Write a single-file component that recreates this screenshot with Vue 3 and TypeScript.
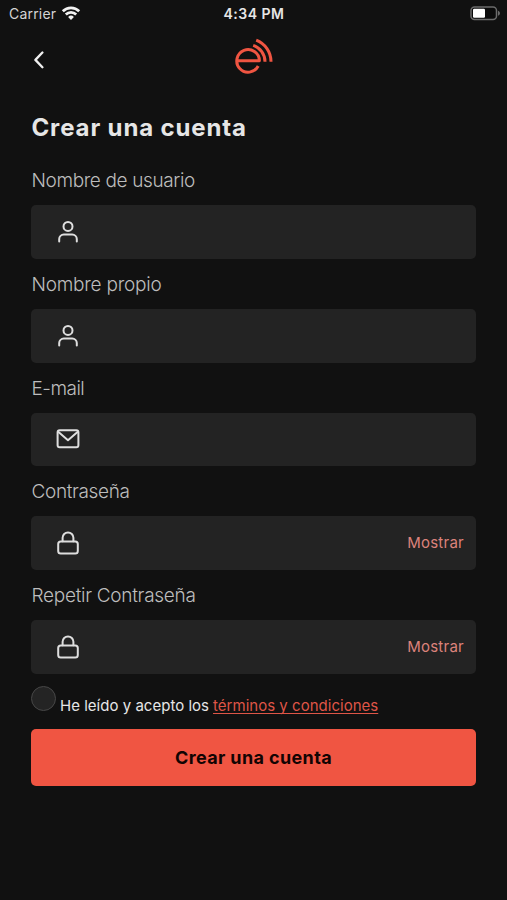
<script setup lang="ts">
import { reactive, ref } from 'vue'

type IconName = 'user' | 'mail' | 'lock'

interface Field {
  id: string
  label: string
  icon: IconName
  secret: boolean
}

const fields: Field[] = [
  { id: 'username', label: 'Nombre de usuario', icon: 'user', secret: false },
  { id: 'name', label: 'Nombre propio', icon: 'user', secret: false },
  { id: 'email', label: 'E-mail', icon: 'mail', secret: false },
  { id: 'password', label: 'Contraseña', icon: 'lock', secret: true },
  { id: 'repeat', label: 'Repetir Contraseña', icon: 'lock', secret: true },
]

const values = reactive<Record<string, string>>({ username: '', name: '', email: '', password: '', repeat: '' })
const visible = reactive<Record<string, boolean>>({})
const accepted = ref(false)
</script>

<template>
  <main class="screen">
    <header class="status">
      <div class="carrier">
        <span>Carrier</span>
        <svg class="wifi" viewBox="0 0 20 15" width="20" height="15">
          <path d="M1.8 5.2a11.6 11.6 0 0 1 16.4 0M4.8 8.5a7.4 7.4 0 0 1 10.4 0" fill="none" stroke="#f2f2f2" stroke-width="2.7" />
          <path d="M7.1 10.9a4.1 4.1 0 0 1 5.8 0L10 14z" fill="#f2f2f2" />
        </svg>
      </div>
      <span class="clock">4:34 PM</span>
      <svg class="battery" viewBox="0 0 32 16" width="32" height="16">
        <rect x="2" y="1" width="25.5" height="12.5" rx="3.5" fill="#0b0b0b" stroke="#6c6c6c" stroke-width="1.5" />
        <rect x="4" y="2.8" width="12" height="9" rx="1.2" fill="#fff" />
        <path d="M29 4.8v5c2.6-.9 2.6-4.1 0-5z" fill="#6c6c6c" />
      </svg>
    </header>

    <nav class="nav">
      <button class="back" type="button" aria-label="Volver">
        <svg viewBox="0 0 12 20" width="12" height="20">
          <path d="M10.4 2.5 3.4 9.9l7 7.3" fill="none" stroke="#f0f0f0" stroke-width="2.3" stroke-linecap="round" stroke-linejoin="round" />
        </svg>
      </button>
      <svg class="logo" viewBox="0 0 40 40" width="40" height="40">
        <g fill="none" stroke="#f05542" stroke-width="3">
          <path d="M24.2 29A11.3 11.3 0 1 1 25.4 23.8H3.5" stroke-linejoin="round" />
          <path d="M19.2 8.4A17.2 17.2 0 0 1 31 24.8" />
          <path d="M22.2 3.2A23 23 0 0 1 37 24.8" />
        </g>
      </svg>
      <span></span>
    </nav>

    <form class="form" @submit.prevent>
      <h1>Crear una cuenta</h1>

      <div v-for="field in fields" :key="field.id" class="field">
        <label :for="field.id" :class="`label-${field.id}`">{{ field.label }}</label>
        <div class="box">
          <svg class="icon" viewBox="0 0 24 24" width="24" height="24">
            <template v-if="field.icon === 'user'">
              <circle cx="12" cy="6.4" r="4.5" />
              <path d="M3.2 21.4v-2.3a4.6 4.6 0 0 1 4.6-4.6h8.4a4.6 4.6 0 0 1 4.6 4.6v2.3" />
            </template>
            <template v-else-if="field.icon === 'mail'">
              <rect x="1.6" y="3.2" width="20.8" height="17" rx="2" />
              <path d="m2.2 4.8 9.8 8.4 9.8-8.4" />
            </template>
            <template v-else>
              <rect x="2.2" y="10.4" width="19.6" height="12.2" rx="2.5" />
              <path d="M6.6 10.2V6.8a5.4 5.4 0 0 1 10.8 0v3.4" />
            </template>
          </svg>
          <input :id="field.id" v-model="values[field.id]" :type="field.secret && !visible[field.id] ? 'password' : 'text'" />
          <button v-if="field.secret" class="toggle" type="button" @click="visible[field.id] = !visible[field.id]">
            {{ visible[field.id] ? 'Ocultar' : 'Mostrar' }}
          </button>
        </div>
      </div>

      <div class="terms">
        <input v-model="accepted" class="check" type="checkbox" aria-label="Aceptar" />
        <p><span>He leído y acepto los</span><a href="#">términos y condiciones</a></p>
      </div>

      <button class="submit" type="submit">Crear una cuenta</button>
    </form>
  </main>
</template>

<style>
body {
  margin: 0;
  background: #111;
}
</style>

<style scoped>
.screen {
  width: 100%;
  height: 900px;
  box-sizing: border-box;
  overflow: hidden;
  background: #111;
  color: #e6e6e6;
  font-family: Inter, "Liberation Sans", sans-serif;
}

button,
input {
  margin: 0;
  padding: 0;
  border: 0;
  background: none;
  color: inherit;
  font: inherit;
}

.status {
  display: grid;
  grid-template-columns: 1fr auto 1fr;
  align-items: center;
  height: 27px;
  padding: 0 6px 0 9px;
  font-size: 14px;
}

.carrier {
  display: flex;
  align-items: center;
  gap: 5px;
  color: #d4d4d4;
  letter-spacing: 0.2px;
}

.wifi {
  margin-top: -1px;
}

.clock {
  margin-left: -2px;
  font-weight: 600;
  letter-spacing: 0.5px;
}

.battery {
  justify-self: end;
}

.nav {
  display: grid;
  grid-template-columns: 1fr auto 1fr;
  align-items: start;
  height: 87px;
  padding: 10px 32px 0;
  box-sizing: border-box;
}

.back {
  display: flex;
  width: 12px;
  padding-top: 13px;
}

.form {
  padding: 0 31px;
}

h1 {
  margin: 0;
  height: 51px;
  padding-left: 0.5px;
  font-size: 24px;
  line-height: 27px;
  font-weight: 700;
  letter-spacing: 0.87px;
  white-space: nowrap;
}

.field {
  height: 103.8px;
}

label {
  display: block;
  height: 40px;
  box-sizing: border-box;
  padding: 1px 0 0 0.5px;
  color: #bdbdbd;
  font-size: 19px;
  font-weight: 300;
  line-height: 30px;
  white-space: nowrap;
}

.label-username {
  letter-spacing: -0.37px;
}

.label-name {
  letter-spacing: -0.22px;
}

.label-email {
  letter-spacing: -0.5px;
}

.label-password {
  letter-spacing: -0.36px;
}

.label-repeat {
  letter-spacing: -0.28px;
}

.box {
  display: flex;
  align-items: center;
  height: 53.8px;
  box-sizing: border-box;
  padding: 0 12px 0 25px;
  border-radius: 5px;
  background: #232323;
}

.icon {
  flex: none;
  fill: none;
  stroke: #dedede;
  stroke-width: 2;
  stroke-linecap: round;
  stroke-linejoin: round;
}

.box input {
  flex: 1;
  min-width: 0;
  height: 100%;
  padding: 0 16px;
  outline: none;
}

.toggle {
  padding-bottom: 2px;
  color: #dc827b;
  font-size: 15px;
  letter-spacing: 0.25px;
}

.terms {
  display: flex;
  gap: 4px;
  height: 43px;
  margin-top: 2px;
}

.check {
  flex: none;
  width: 25px;
  height: 25px;
  appearance: none;
  box-sizing: border-box;
  border: 1.5px solid #474747;
  border-radius: 50%;
  background: #242424;
}

.check:checked {
  background: #f05542;
}

.terms p {
  display: flex;
  gap: 4px;
  margin: 10px 0 0;
  font-size: 15px;
  line-height: 20px;
  letter-spacing: 0.02px;
  white-space: nowrap;
}

.terms a {
  color: #df5547;
  text-decoration: underline;
  text-decoration-skip-ink: none;
  text-underline-offset: 2px;
}

.submit {
  width: 100%;
  height: 57.5px;
  border-radius: 5px;
  background: #f05542;
  color: #120403;
  font-size: 18px;
  font-weight: 700;
  letter-spacing: 0.37px;
}
</style>
